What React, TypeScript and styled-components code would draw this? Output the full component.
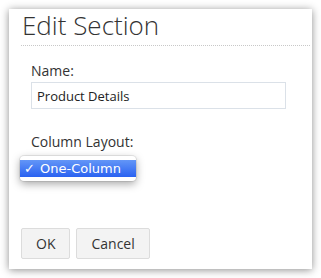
import React from 'react';
import styled, { createGlobalStyle } from 'styled-components';

const GlobalStyle = createGlobalStyle`
  body {
    margin: 0;
    background: #ffffff;
    font-family: "Open Sans", "Liberation Sans", sans-serif;
    color: #333333;
  }
`;

const Page = styled.div`
  padding: 9px;
`;

const Dialog = styled.div`
  width: 303px;
  height: 260px;
  background: #ffffff;
  box-shadow: 0 1px 8px rgba(0, 0, 0, 0.45);
  display: flex;
  flex-direction: column;
`;

const Header = styled.div`
  margin: 0 2px 0 12px;
  border-bottom: 1px dotted #c8c8c8;
  padding: 0 0 4px 1px;
`;

const Title = styled.h1`
  margin: 0;
  font-size: 26px;
  font-weight: 300;
  line-height: 32px;
  color: #333333;
`;

const Body = styled.div`
  flex: 1;
  padding: 15px 0 0 22px;
`;

const Field = styled.div`
  margin-bottom: 23px;
`;

const Label = styled.div`
  font-size: 14px;
  line-height: 20px;
  margin-bottom: 1px;
`;

const TextInput = styled.input`
  box-sizing: border-box;
  width: 255px;
  height: 27px;
  border: 1px solid #dbe1e8;
  padding: 0 5px;
  font-family: "Open Sans", "Liberation Sans", sans-serif;
  font-size: 13px;
  color: #222222;
  outline: none;
`;

const SelectWrap = styled.div`
  position: relative;
  height: 24px;
`;

const SelectBox = styled.div`
  margin-top: 5px;
  width: 96px;
  height: 20px;
  border: 1px solid #b8b8b8;
  border-radius: 3px;
  background: #f3f3f3;
`;

const Popup = styled.div`
  position: absolute;
  left: -11px;
  top: -1px;
  width: 116px;
  padding: 4px 0;
  background: #ffffff;
  border-radius: 4px;
  box-shadow: 0 3px 9px rgba(0, 0, 0, 0.35), 0 0 0 1px rgba(0, 0, 0, 0.08);
`;

const Option = styled.div<{ $active?: boolean }>`
  height: 17px;
  display: flex;
  align-items: center;
  padding-left: 4px;
  font-family: "DejaVu Sans", "Liberation Sans", sans-serif;
  font-size: 13px;
  color: ${p => (p.$active ? '#ffffff' : '#000000')};
  background: ${p => (p.$active ? 'linear-gradient(#6396f7, #2a62f1)' : 'transparent')};
`;

const Check = styled.span`
  width: 16px;
  font-weight: 700;
`;

const Footer = styled.div`
  display: flex;
  gap: 6px;
  padding: 0 0 10px 12px;
`;

const Button = styled.button`
  height: 31px;
  padding: 0 14px;
  min-width: 48px;
  background: #f3f3f3;
  border: 1px solid #dcdcdc;
  border-radius: 2px;
  font-family: "Open Sans", "Liberation Sans", sans-serif;
  font-size: 14px;
  color: #333333;
`;

export default function App() {
  return (
    <>
      <GlobalStyle />
      <Page>
        <Dialog>
          <Header>
            <Title>Edit Section</Title>
          </Header>
          <Body>
            <Field>
              <Label>Name:</Label>
              <TextInput defaultValue="Product Details" />
            </Field>
            <Field>
              <Label>Column Layout:</Label>
              <SelectWrap>
                <SelectBox />
                <Popup>
                  <Option $active>
                    <Check>✓</Check>One-Column
                  </Option>
                </Popup>
              </SelectWrap>
            </Field>
          </Body>
          <Footer>
            <Button>OK</Button>
            <Button>Cancel</Button>
          </Footer>
        </Dialog>
      </Page>
    </>
  );
}
